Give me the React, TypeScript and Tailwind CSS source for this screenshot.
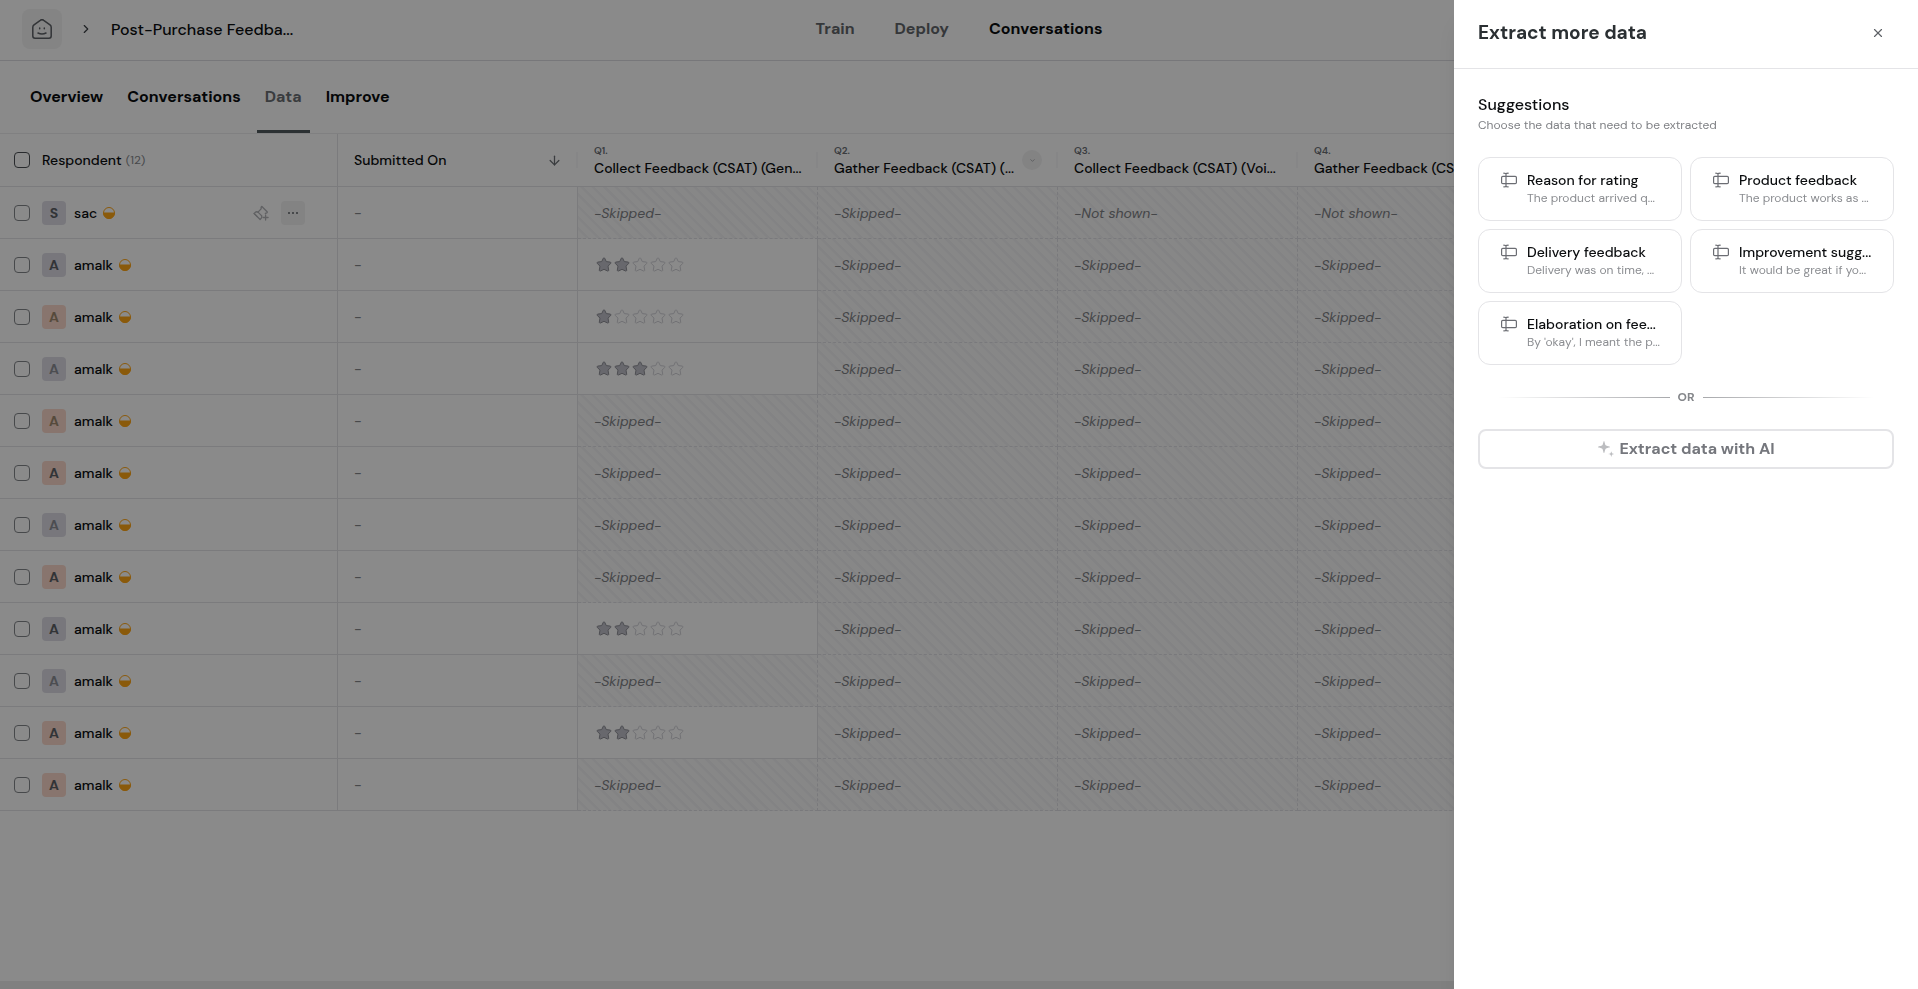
import { ArrowDown, ChevronDown, ChevronRight, X } from "lucide-react";

type Avatar = { bg: string; text: string };

const LAVENDER: Avatar = { bg: "bg-[#dedde6]", text: "text-[#5d6166]" };
const LAVENDER_SOFT: Avatar = { bg: "bg-[#dedde6]", text: "text-[#8d8f96]" };
const PEACH: Avatar = { bg: "bg-[#fbd9cb]", text: "text-[#5d6166]" };
const PEACH_SOFT: Avatar = { bg: "bg-[#fbd9cb]", text: "text-[#a08a70]" };

type Answer = number | "skipped" | "not-shown";
type Row = { name: string; avatar: Avatar; answers: Answer[] };

const S: Answer = "skipped";
const N: Answer = "not-shown";

const rows: Row[] = [
  { name: "sac", avatar: LAVENDER, answers: [S, S, N, N] },
  { name: "amalk", avatar: LAVENDER, answers: [2, S, S, S] },
  { name: "amalk", avatar: PEACH_SOFT, answers: [1, S, S, S] },
  { name: "amalk", avatar: LAVENDER_SOFT, answers: [3, S, S, S] },
  { name: "amalk", avatar: PEACH_SOFT, answers: [S, S, S, S] },
  { name: "amalk", avatar: PEACH, answers: [S, S, S, S] },
  { name: "amalk", avatar: LAVENDER_SOFT, answers: [S, S, S, S] },
  { name: "amalk", avatar: PEACH, answers: [S, S, S, S] },
  { name: "amalk", avatar: LAVENDER, answers: [2, S, S, S] },
  { name: "amalk", avatar: LAVENDER_SOFT, answers: [S, S, S, S] },
  { name: "amalk", avatar: PEACH, answers: [2, S, S, S] },
  { name: "amalk", avatar: PEACH, answers: [S, S, S, S] },
];

const questions = [
  { id: "Q1.", title: "Collect Feedback (CSAT) (Gen..." },
  { id: "Q2.", title: "Gather Feedback (CSAT) (...", menu: true },
  { id: "Q3.", title: "Collect Feedback (CSAT) (Voi..." },
  { id: "Q4.", title: "Gather Feedback (CSAT) (..." },
];

const suggestions = [
  { title: "Reason for rating", sample: "The product arrived q..." },
  { title: "Product feedback", sample: "The product works as ..." },
  { title: "Delivery feedback", sample: "Delivery was on time, ..." },
  { title: "Improvement sugg...", sample: "It would be great if yo..." },
  { title: "Elaboration on fee...", sample: "By 'okay', I meant the p..." },
];

function HomeIcon() {
  return (
    <svg width="20" height="20" viewBox="0 0 20 20" fill="none" stroke="currentColor" strokeWidth="1.5" strokeLinecap="round" strokeLinejoin="round" aria-hidden="true">
      <path d="M.8 8.2c0-1 .4-1.7 1.200-2.300l6.300-4.600c1-.8 2.400-.8 3.400 0L18 5.900c.8.600 1.200 1.300 1.200 2.300V17c0 1.200-.9 2.200-2.200 2.200H3C1.700 19.200.8 18.200.8 17z" />
      <path d="M6 14c2.400 1.200 5.600 1.200 8 0" />
      <path d="M7.700 9v.8M12.300 9v.8" />
    </svg>
  );
}

function HalfCircleIcon() {
  return (
    <svg width="12" height="12" viewBox="0 0 12 12" aria-hidden="true">
      <circle cx="6" cy="6" r="5.5" fill="none" stroke="#ffa616" />
      <path d="M0 5.500h12a6 6.500 0 0 1-12 0z" fill="#ffa616" />
    </svg>
  );
}

function PinPlusIcon() {
  return (
    <svg width="16" height="16" viewBox="0 0 16 16" fill="none" stroke="currentColor" strokeWidth="1.3" strokeLinecap="round" strokeLinejoin="round" aria-hidden="true">
      <path d="M8.900 1.500l5.200 5.200c.4.4.2.9-.3 1.100l-1.500.5M8.900 1.500c-.5.100-.7.400-.7.900l-.1 1.500L5 7.100" />
      <path d="M5 7.100c-1-.5-2.200-.3-3 .5l-.9.9 6 6 .9-.9c.8-.8.9-2 .5-3" />
      <path d="M5 7.100l3.500 3.500M1.200 8.600l3 3M12.600 10v5M10.100 12.500h5" />
    </svg>
  );
}

function TextFieldIcon() {
  return (
    <svg width="16" height="16" viewBox="0 0 16 16" fill="none" stroke="currentColor" strokeWidth="1.2" strokeLinecap="round" strokeLinejoin="round" aria-hidden="true">
      <rect x=".6" y="4.4" width="14.800" height="7.200" rx="1.200" />
      <path d="M5 2v12M2.800 1.200c1.300 0 2.200.3 2.200.9 0-.6.9-.9 2.200-.9M2.800 14.800c1.300 0 2.200-.3 2.200-.9 0 .6.9.9 2.200.9" />
    </svg>
  );
}

function SparkleIcon() {
  return (
    <svg width="18" height="18" viewBox="0 0 18 18" fill="currentColor" aria-hidden="true">
      <path d="M7 1c.6 0 .9 3.500 1.700 4.300S13 6.400 13 7s-3.500.9-4.300 1.700S7.600 13 7 13s-.9-3.500-1.700-4.300S1 7.600 1 7s3.500-.9 4.300-1.700S6.400 1 7 1z" />
      <path d="M14.300 11.400c.3 0 .4 1.400.8 1.800s1.800.5 1.800.8-1.400.4-1.800.8-.5 1.900-.8 1.900-.4-1.500-.8-1.900-1.900-.5-1.900-.8 1.500-.4 1.900-.8.500-1.800.8-1.800z" />
    </svg>
  );
}

function Star({ filled }: { filled: boolean }) {
  return (
    <svg width="16" height="16" viewBox="0 0 16 16" className={filled ? "text-[#8f9097]" : "text-[#d2d2d8]"} fill={filled ? "#c0c0ca" : "none"} stroke="currentColor" strokeLinejoin="round" aria-hidden="true">
      <path d="M7.300 1.300c.3-.6 1.100-.6 1.400 0l1.600 3.300 3.900.5c.7.100 1 .9.500 1.400L12 9.100l.7 4c.1.700-.6 1.200-1.200.9L8 12.300 4.500 14c-.6.300-1.300-.2-1.200-.9l.7-4-2.700-2.600c-.5-.5-.2-1.300.5-1.400l3.900-.5z" />
    </svg>
  );
}

function Checkbox({ label, dark = false }: { label: string; dark?: boolean }) {
  return (
    <input
      type="checkbox"
      aria-label={label}
      className={`block size-4 shrink-0 appearance-none rounded border ${dark ? "border-[#4b4f54]" : "border-[#84878b]"}`}
    />
  );
}

function AnswerCell({ answer }: { answer: Answer }) {
  if (typeof answer === "number") {
    return (
      <td className="border-r border-b border-[#e4e4e7] pl-[18px]">
        <div className="flex gap-0.5" role="img" aria-label={`${answer} of 5 stars`}>
          {[1, 2, 3, 4, 5].map((n) => (
            <Star key={n} filled={n <= answer} />
          ))}
        </div>
      </td>
    );
  }
  return (
    <td className="border-r border-b border-dashed border-[#e0e0e5] bg-[#f9f9fa] bg-[repeating-linear-gradient(45deg,transparent_0px,transparent_5px,#f2f2f4_6px,#f2f2f4_8px)] pl-4 text-sm text-[#808286] italic">
      <span>{answer === "skipped" ? "-Skipped-" : "-Not shown-"}</span>
    </td>
  );
}

export default function App() {
  return (
    <div className="flex h-screen flex-col overflow-hidden bg-white font-['DM_Sans',Inter,sans-serif] text-[#0b0d0f]">
      <header className="grid h-[61px] shrink-0 grid-cols-[1fr_auto_1fr] items-center border-b border-[#dcdce2] pb-0.5">
        <div className="flex items-center pl-[22px]">
          <a href="#home" aria-label="Home" className="flex size-10 items-center justify-center rounded-lg bg-[#f4f4f4] text-[#5d6166]">
            <HomeIcon />
          </a>
          <ChevronRight size={14} className="ml-[17px] text-[#3b3f44]" aria-hidden="true" />
          <span className="ml-[18px] pt-0.5 text-base font-medium">Post-Purchase Feedba...</span>
        </div>
        <nav aria-label="Main" className="flex gap-10 text-base font-bold">
          <a href="#train" className="text-[#63676b]">Train</a>
          <a href="#deploy" className="text-[#63676b]">Deploy</a>
          <a href="#conversations">Conversations</a>
        </nav>
      </header>

      <nav aria-label="Sections" className="flex h-[73px] shrink-0 gap-2 border-b border-[#ececee] pl-[22px] text-base font-bold">
        <a href="#overview" className="flex items-center px-2">Overview</a>
        <a href="#list" className="flex items-center px-2">Conversations</a>
        <a href="#data" aria-current="page" className="flex items-center border-b-3 border-[#525b5e] px-2 pt-[3px] text-[#6b7075]">Data</a>
        <a href="#improve" className="flex items-center px-2">Improve</a>
      </nav>

      <main className="flex-1 overflow-hidden">
        <table className="w-[1538px] table-fixed border-separate border-spacing-0 text-left">
          <colgroup>
            <col className="w-[338px]" />
            <col className="w-[240px]" />
            {questions.map((q) => (
              <col key={q.id} className="w-[240px]" />
            ))}
          </colgroup>
          <thead>
            <tr className="h-[53px]">
              <th scope="col" className="border-r border-b border-[#e4e4e7] pl-3.5 font-medium">
                <div className="flex items-center">
                  <Checkbox label="Select all respondents" dark />
                  <span className="ml-3 text-sm">Respondent</span>
                  <span className="ml-1 text-xs font-normal text-[#85878b]">(12)</span>
                </div>
              </th>
              <th scope="col" className="border-b border-[#e4e4e7] pl-4 text-sm font-medium">
                <div className="flex items-center justify-between">
                  Submitted On
                  <div className="flex items-center gap-3.5">
                    <ArrowDown size={15} className="text-[#6b7075]" aria-hidden="true" />
                    <span className="h-4 w-0.5 bg-[#f8f8f9]" />
                  </div>
                </div>
              </th>
              {questions.map((q) => (
                <th key={q.id} scope="col" className="border-b border-[#e4e4e7] pl-4 font-medium">
                  <div className="flex items-center justify-between">
                    <div className="whitespace-nowrap">
                      <div className="text-[10px] leading-4 font-semibold text-[#6b7075]">{q.id}</div>
                      <div className="text-sm leading-[18px]">{q.title}</div>
                    </div>
                    <div className="flex items-center gap-3.5">
                      {q.menu && (
                        <button type="button" aria-label="Column menu" className="flex size-5 items-center justify-center rounded-full bg-[#f2f2f3] text-[#84878b]">
                          <ChevronDown size={7} />
                        </button>
                      )}
                      <span className="h-4 w-0.5 bg-[#f8f8f9]" />
                    </div>
                  </div>
                </th>
              ))}
            </tr>
          </thead>
          <tbody>
            {rows.map((row, i) => (
              <tr key={i} className="h-[52px]">
                <td className="border-r border-b border-[#e4e4e7] pr-8 pl-3.5">
                  <div className="flex items-center">
                    <Checkbox label={`Select ${row.name}`} />
                    <span className={`ml-3 flex size-6 items-center justify-center rounded-sm text-sm font-bold ${row.avatar.bg} ${row.avatar.text}`}>
                      {row.name[0].toUpperCase()}
                    </span>
                    <span className="mr-1.5 ml-2 text-sm font-medium">{row.name}</span>
                    <HalfCircleIcon />
                    {i === 0 && (
                      <div className="ml-auto flex items-center gap-3">
                        <button type="button" aria-label="Pin" className="text-[#b3b4b8]">
                          <PinPlusIcon />
                        </button>
                        <button type="button" aria-label="More" className="flex size-6 items-center justify-center gap-0.5 rounded bg-[#f2f2f2]">
                          <span className="size-0.5 bg-[#84878b]" />
                          <span className="size-0.5 bg-[#84878b]" />
                          <span className="size-0.5 bg-[#84878b]" />
                        </button>
                      </div>
                    )}
                  </div>
                </td>
                <td className="border-r border-b border-[#e4e4e7] pl-4 text-sm font-medium text-[#85878b]">-</td>
                {row.answers.map((answer, j) => (
                  <AnswerCell key={j} answer={answer} />
                ))}
              </tr>
            ))}
          </tbody>
        </table>
      </main>

      <div className="h-2 shrink-0 bg-[#ededed]" />

      <div className="fixed inset-0 bg-black/46" />

      <aside role="dialog" aria-labelledby="panel-title" className="fixed inset-y-0 right-0 w-[464px] bg-white shadow-xl">
        <div className="flex h-[69px] items-center justify-between border-b border-[#e4e4e7] pr-7 pb-0.5 pl-6">
          <h2 id="panel-title" className="text-[19px] font-bold text-[#2b3033]">Extract more data</h2>
          <button type="button" aria-label="Close" className="flex size-6 items-center justify-center text-[#5d6166]">
            <X size={14} strokeWidth={2} />
          </button>
        </div>
        <div className="px-6 pt-6">
          <h3 className="text-base leading-6 font-medium">Suggestions</h3>
          <p className="text-xs leading-4 text-[#808286]">Choose the data that need to be extracted</p>
          <div className="mt-6 grid grid-cols-2 gap-2">
            {suggestions.map((s) => (
              <button key={s.title} type="button" className="flex h-16 items-start gap-2.5 rounded-xl border border-[#e4e4e7] pt-3 pl-[22px] text-left">
                <span className="pt-0.5 text-[#6b6d73]">
                  <TextFieldIcon />
                </span>
                <span className="whitespace-nowrap">
                  <span className="block text-sm leading-5 font-medium">{s.title}</span>
                  <span className="block text-xs leading-4 text-[#8b8d91]">{s.sample}</span>
                </span>
              </button>
            ))}
          </div>
          <div className="mt-6 flex items-center gap-2 px-5">
            <span className="h-px flex-1 bg-linear-to-l from-[#a8a9ac] to-white" />
            <span className="text-xs leading-4 font-bold text-[#85878b]">OR</span>
            <span className="h-px flex-1 bg-linear-to-r from-[#a8a9ac] to-white" />
          </div>
          <button type="button" className="mt-6 flex h-10 w-full items-center justify-center gap-1 rounded-lg border-2 border-[#e4e4e7] text-base font-bold text-[#75777d]">
            <span className="text-[#bcbdc0]">
              <SparkleIcon />
            </span>
            Extract data with AI
          </button>
        </div>
      </aside>
    </div>
  );
}
